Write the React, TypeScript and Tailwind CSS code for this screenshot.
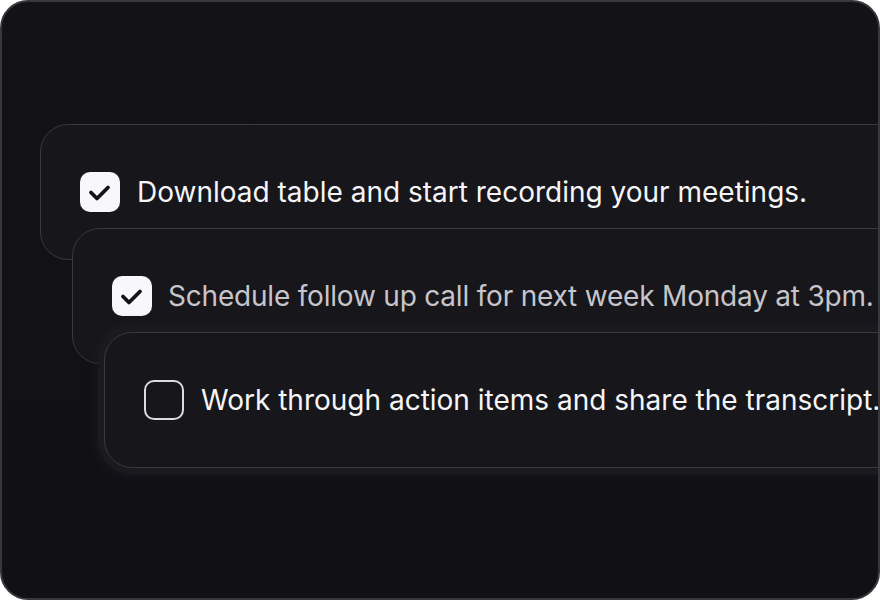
const TASKS = [
  { text: 'Download table and start recording your meetings.', done: true, dim: false, ml: 'ml-[38px]', mt: 'mt-[122px]', glow: false },
  { text: 'Schedule follow up call for next week Monday at 3pm.', done: true, dim: true, ml: 'ml-[70px]', mt: '-mt-[32px]', glow: false },
  { text: 'Work through action items and share the transcript.', done: false, dim: false, ml: 'ml-[102px]', mt: '-mt-[32px]', glow: true },
];

function Check({ done }: { done: boolean }) {
  if (!done) {
    return <div className="w-10 h-10 shrink-0 rounded-[10px] border-2 border-[#dcdbe0]" />;
  }
  return (
    <div className="w-10 h-10 shrink-0 rounded-[10px] bg-[#f8f7fb] flex items-center justify-center">
      <svg width="40" height="40" viewBox="0 0 40 40" fill="none">
        <path d="M11 20.5 L17 26.5 L28 15.5" stroke="#141318" strokeWidth="3.8" strokeLinecap="round" strokeLinejoin="round" />
      </svg>
    </div>
  );
}

export default function App() {
  return (
    <div className="w-[880px] h-[600px] bg-white" style={{ fontFamily: 'Inter, "Liberation Sans", sans-serif' }}>
      <div className="relative w-full h-full rounded-[28px] border-2 border-[#38373d] overflow-hidden bg-[linear-gradient(180deg,#131217_0%,#111015_100%)] flex flex-col">
        {TASKS.map((t, i) => (
          <div key={i}
            className={`relative ${t.ml} ${t.mt} w-[900px] h-[136px] shrink-0 rounded-[28px] border-[1.5px] border-[#3a393f] bg-[#17161b] flex items-center pl-[39px] gap-[16px] ${t.glow ? 'shadow-[0_0_0_6px_#1b1a1f,0_0_10px_8px_rgba(30,29,35,0.7)]' : ''}`}>
            <Check done={t.done} />
            <span className={`text-[28px] whitespace-nowrap ${t.dim ? 'text-[#c6c5cb] tracking-[-0.2px]' : 'text-[#f5f5f7] ml-px'}`}>{t.text}</span>
          </div>
        ))}
      </div>
    </div>
  );
}
